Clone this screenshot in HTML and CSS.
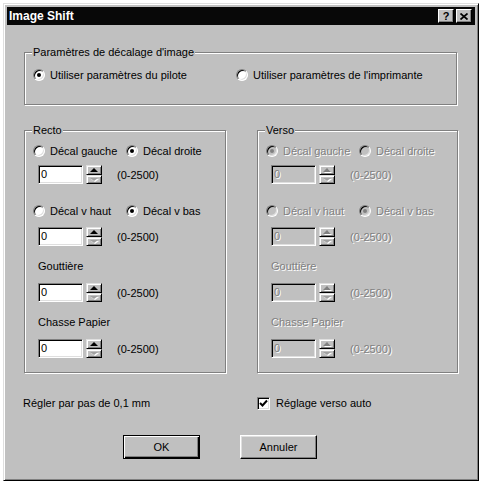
FILE: index.html
```html
<!doctype html>
<html lang="fr">
  <head>
    <meta charset="utf-8">
    <title>Image Shift</title>
    <link rel="stylesheet" href="styles.css">
  </head>
  <body>
    <div class="window">
      <div class="titlebar">
        <span class="caption">Image Shift</span>
        <span class="caption-btn help">?</span>
        <span class="caption-btn close">
          <svg width="8" height="7" viewBox="0 0 8 7"><path d="M0.5 0.5L7.5 6.5M7.5 0.5L0.5 6.5" stroke="#000" stroke-width="1.7" fill="none"/></svg>
        </span>
      </div>

      <div class="client">
        <fieldset class="group top">
          <legend>Paramètres de décalage d'image</legend>
          <div class="radio-row wide">
            <label class="radio checked"><i></i>Utiliser paramètres du pilote</label>
            <label class="radio"><i></i>Utiliser paramètres de l'imprimante</label>
          </div>
        </fieldset>

        <div class="sides">
          <fieldset class="group side">
            <legend>Recto</legend>
            <div class="radio-row">
              <label class="radio"><i></i>Décal gauche</label>
              <label class="radio checked"><i></i>Décal droite</label>
            </div>
            <div class="spin-row first">
              <span class="edit">0</span>
              <span class="spin"><b class="up"></b><b class="down off"></b></span>
              <span class="range">(0-2500)</span>
            </div>
            <div class="radio-row second">
              <label class="radio"><i></i>Décal v haut</label>
              <label class="radio checked"><i></i>Décal v bas</label>
            </div>
            <div class="spin-row">
              <span class="edit">0</span>
              <span class="spin"><b class="up"></b><b class="down off"></b></span>
              <span class="range">(0-2500)</span>
            </div>
            <div class="field-label">Gouttière</div>
            <div class="spin-row labelled">
              <span class="edit">0</span>
              <span class="spin"><b class="up"></b><b class="down off"></b></span>
              <span class="range">(0-2500)</span>
            </div>
            <div class="field-label">Chasse Papier</div>
            <div class="spin-row labelled">
              <span class="edit">0</span>
              <span class="spin"><b class="up"></b><b class="down off"></b></span>
              <span class="range">(0-2500)</span>
            </div>
          </fieldset>

          <fieldset class="group side disabled">
            <legend>Verso</legend>
            <div class="radio-row">
              <label class="radio checked"><i></i>Décal gauche</label>
              <label class="radio"><i></i>Décal droite</label>
            </div>
            <div class="spin-row first">
              <span class="edit">0</span>
              <span class="spin"><b class="up off"></b><b class="down off"></b></span>
              <span class="range">(0-2500)</span>
            </div>
            <div class="radio-row second">
              <label class="radio"><i></i>Décal v haut</label>
              <label class="radio checked"><i></i>Décal v bas</label>
            </div>
            <div class="spin-row">
              <span class="edit">0</span>
              <span class="spin"><b class="up off"></b><b class="down off"></b></span>
              <span class="range">(0-2500)</span>
            </div>
            <div class="field-label">Gouttière</div>
            <div class="spin-row labelled">
              <span class="edit">0</span>
              <span class="spin"><b class="up off"></b><b class="down off"></b></span>
              <span class="range">(0-2500)</span>
            </div>
            <div class="field-label">Chasse Papier</div>
            <div class="spin-row labelled">
              <span class="edit">0</span>
              <span class="spin"><b class="up off"></b><b class="down off"></b></span>
              <span class="range">(0-2500)</span>
            </div>
          </fieldset>
        </div>

        <div class="bottom-row">
          <span class="step">Régler par pas de 0,1 mm</span>
          <label class="check">
            <i><svg width="9" height="9" viewBox="0 0 9 9"><path d="M1 4L3.5 6.5L8 1.5" stroke="#000" stroke-width="2" fill="none"/></svg></i>
            Réglage verso auto
          </label>
        </div>

        <div class="buttons">
          <span class="btn default">OK</span>
          <span class="btn">Annuler</span>
        </div>
      </div>
    </div>
  </body>
</html>
```

FILE: styles.css
```css
body {
  margin: 0;
  background: #fff;
  font: 11px/14px "Liberation Sans", Arial, sans-serif;
  color: #000;
}
.window {
  margin: 3px 0 0 3px;
  width: 476px;
  height: 478px;
  box-sizing: border-box;
  padding: 3px;
  background: #c0c0c0;
  border: 1px solid;
  border-color: #dfdfdf #000 #000 #dfdfdf;
  box-shadow: inset 1px 1px #fff, inset -1px -1px #808080;
}
.titlebar {
  height: 18px;
  display: flex;
  align-items: center;
  gap: 2px;
  padding: 0 3px 0 2px;
  background: #080808;
  color: #fff;
}
.caption {
  flex: 1;
  font-weight: bold;
  font-size: 12px;
}
.caption-btn {
  width: 16px;
  height: 14px;
  box-sizing: border-box;
  display: flex;
  align-items: center;
  justify-content: center;
  background: #c0c0c0;
  color: #000;
  border: 1px solid;
  border-color: #fff #000 #000 #fff;
  box-shadow: inset -1px -1px #808080;
  font-weight: bold;
  font-size: 11px;
}

.client {
  padding: 0 18px 0 17px;
}
.group {
  margin: 0;
  min-width: 0;
  border: 1px solid #808080;
  box-shadow: inset 1px 1px #fff, 1px 1px #fff;
}
.group legend {
  padding: 0 1px;
  margin-left: -1px;
  background: #c0c0c0;
  line-height: 14px;
  color: #000;
  text-shadow: none;
}
.group.top {
  margin-top: 20px;
  padding: 9px 8px 22px;
}
.sides {
  display: grid;
  grid-template-columns: 202px 201px;
  column-gap: 31px;
  margin-top: 18px;
}
.group.side {
  padding: 7px 8px 14px;
}

/* radios */
.radio-row {
  display: grid;
  grid-template-columns: 93px auto;
  height: 14px;
}
.radio-row.wide {
  grid-template-columns: 203px auto;
}
.radio-row.second {
  margin-top: 20px;
}
.radio {
  display: flex;
  align-items: center;
  gap: 5px;
  white-space: nowrap;
  overflow: hidden;
}
.radio i {
  flex: none;
  width: 12px;
  height: 12px;
  box-sizing: border-box;
  border-radius: 50%;
  border: 1px solid;
  border-color: #808080 #fff #fff #808080;
  box-shadow: inset 1px 1px #000, inset -1px -1px #dfdfdf;
  background: #fff;
  display: flex;
  align-items: center;
  justify-content: center;
}
.radio.checked i::after {
  content: "";
  width: 4px;
  height: 4px;
  border-radius: 50%;
  background: #000;
}

/* spinners */
.spin-row {
  display: flex;
  align-items: center;
  padding-left: 5px;
  margin-top: 9px;
}
.spin-row.first {
  margin-top: 7px;
}
.spin-row.labelled {
  margin-top: 10px;
}
.field-label {
  margin-top: 13px;
  padding-left: 5px;
}
.edit {
  width: 45px;
  height: 19px;
  box-sizing: border-box;
  padding-left: 2px;
  line-height: 17px;
  background: #fff;
  border: 1px solid;
  border-color: #808080 #fff #fff #808080;
  box-shadow: inset 1px 1px #000, inset -1px -1px #dfdfdf;
}
.spin {
  display: flex;
  flex-direction: column;
  width: 16px;
  margin-left: 3px;
}
.spin b {
  height: 10px;
  box-sizing: border-box;
  display: flex;
  align-items: center;
  justify-content: center;
  background: #c0c0c0;
  border: 1px solid;
  border-color: #dfdfdf #000 #000 #dfdfdf;
  box-shadow: inset 1px 1px #fff, inset -1px -1px #808080;
}
.spin b.down {
  height: 9px;
}
.spin b::after {
  content: "";
  border-left: 4px solid transparent;
  border-right: 4px solid transparent;
}
.spin b.up::after {
  border-bottom: 4px solid #000;
}
.spin b.down::after {
  border-top: 3px solid #000;
}
.spin b.off.up::after {
  border-bottom-color: #808080;
  filter: drop-shadow(1px 1px 0 #fff);
}
.spin b.off.down::after {
  border-top-color: #a0a0a0;
  filter: drop-shadow(1px 1px 0 #fff);
}
.range {
  margin-left: 15px;
}

/* disabled side */
.disabled {
  color: #808080;
  text-shadow: 1px 1px 0 #fff;
}
.disabled .radio i {
  background: #c0c0c0;
}
.disabled .radio.checked i::after {
  background: #808080;
}
.disabled .edit {
  background: #c0c0c0;
}

/* bottom */
.bottom-row {
  display: grid;
  grid-template-columns: 202px 201px;
  column-gap: 31px;
  margin-top: 23px;
  height: 14px;
  align-items: center;
}
.step {
  margin-left: -1px;
}
.check {
  display: flex;
  align-items: center;
  gap: 6px;
}
.check i {
  width: 13px;
  height: 13px;
  box-sizing: border-box;
  display: flex;
  align-items: center;
  justify-content: center;
  background: #fff;
  border: 1px solid;
  border-color: #808080 #fff #fff #808080;
  box-shadow: inset 1px 1px #000, inset -1px -1px #dfdfdf;
}
.buttons {
  display: flex;
  gap: 40px;
  margin-top: 25px;
  padding-left: 99px;
}
.btn {
  width: 77px;
  height: 24px;
  box-sizing: border-box;
  display: flex;
  align-items: center;
  justify-content: center;
  border: 1px solid;
  border-color: #fff #000 #000 #fff;
  box-shadow: inset -1px -1px #808080, inset 1px 1px #dfdfdf;
}
.btn.default {
  border-color: #000;
  box-shadow: inset 1px 1px #fff, inset -1px -1px #000, inset -2px -2px #808080;
}
```
